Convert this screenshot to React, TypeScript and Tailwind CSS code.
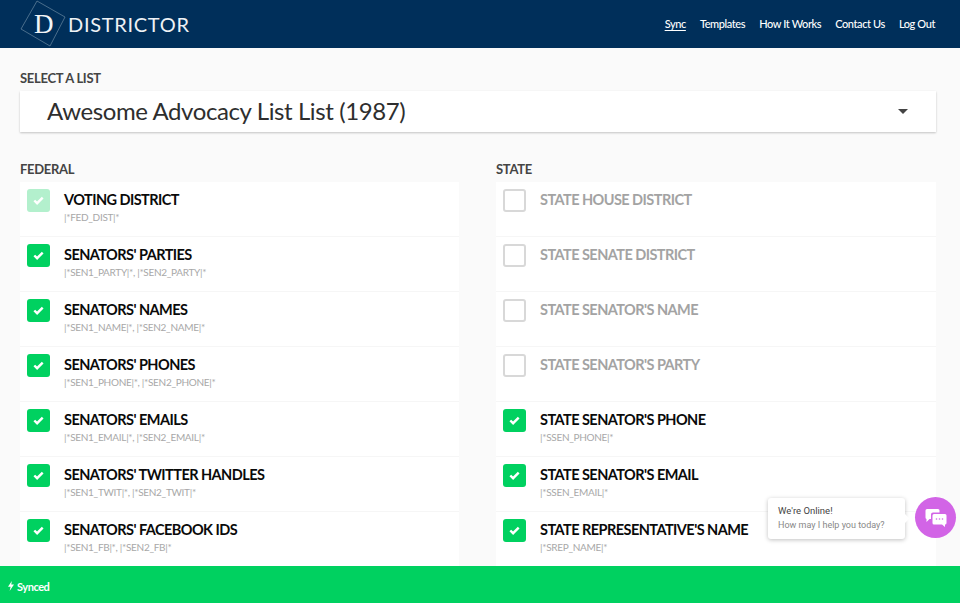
import React from "react";

type Row = { t: string; s?: string; on: boolean; dim?: boolean };

const federal: Row[] = [
  { t: "VOTING DISTRICT", s: "|*FED_DIST|*", on: true, dim: true },
  { t: "SENATORS' PARTIES", s: "|*SEN1_PARTY|*, |*SEN2_PARTY|*", on: true },
  { t: "SENATORS' NAMES", s: "|*SEN1_NAME|*, |*SEN2_NAME|*", on: true },
  { t: "SENATORS' PHONES", s: "|*SEN1_PHONE|*, |*SEN2_PHONE|*", on: true },
  { t: "SENATORS' EMAILS", s: "|*SEN1_EMAIL|*, |*SEN2_EMAIL|*", on: true },
  { t: "SENATORS' TWITTER HANDLES", s: "|*SEN1_TWIT|*, |*SEN2_TWIT|*", on: true },
  { t: "SENATORS' FACEBOOK IDS", s: "|*SEN1_FB|*, |*SEN2_FB|*", on: true },
];

const stateRows: Row[] = [
  { t: "STATE HOUSE DISTRICT", on: false },
  { t: "STATE SENATE DISTRICT", on: false },
  { t: "STATE SENATOR'S NAME", on: false },
  { t: "STATE SENATOR'S PARTY", on: false },
  { t: "STATE SENATOR'S PHONE", s: "|*SSEN_PHONE|*", on: true },
  { t: "STATE SENATOR'S EMAIL", s: "|*SSEN_EMAIL|*", on: true },
  { t: "STATE REPRESENTATIVE'S NAME", s: "|*SREP_NAME|*", on: true },
];

function Check({ on, dim }: { on: boolean; dim?: boolean }) {
  if (!on) {
    return <div className="w-[23px] h-[23px] shrink-0 rounded-[3px] border-2 border-[#d8d8d8] bg-white" />;
  }
  return (
    <div className={`w-[23px] h-[23px] shrink-0 rounded-[3px] flex items-center justify-center ${dim ? "bg-[#b3f0cd]" : "bg-[#00d160]"}`}>
      <svg width="11" height="9" viewBox="0 0 11 9" fill="none">
        <path d="M1.3 4.5 L4.1 7.2 L9.7 1.6" stroke="white" strokeWidth="2.4" />
      </svg>
    </div>
  );
}

function ListRow({ r }: { r: Row }) {
  return (
    <div className="h-[55px] shrink-0 flex gap-[14px] pl-[7px] pt-[7px] border-b border-[#f6f6f6] bg-white">
      <Check on={r.on} dim={r.dim} />
      <div className="min-w-0">
        <div className={`text-[14.5px] leading-[21px] font-bold tracking-[-0.55px] ${r.on ? "text-[#0a0a0a]" : "text-[#a3a3a3]"}`}>{r.t}</div>
        {r.s && <div className="text-[10px] leading-[12px] mt-[1px] tracking-[-0.3px] text-[#a8a8a8]">{r.s}</div>}
      </div>
    </div>
  );
}

function Column({ title, rows }: { title: string; rows: Row[] }) {
  return (
    <div className="min-w-0">
      <div className="text-[13px] leading-[16px] font-bold tracking-[-0.3px] text-[#444] mb-[5px]">{title}</div>
      <div>{rows.map((r) => <ListRow key={r.t} r={r} />)}</div>
    </div>
  );
}

export default function App() {
  return (
    <div className="relative h-[603px] w-[960px] overflow-hidden flex flex-col bg-[#fafafa] font-['Lato',sans-serif]">
      <header className="h-[48px] shrink-0 bg-[#002f5a] flex items-center justify-between pl-[20px] pr-[25px]">
        <div className="flex items-center">
          <svg width="47" height="48" viewBox="0 0 47 48" className="shrink-0">
            <polygon points="17,1 45,17 30,46 1,29" fill="none" stroke="#5d7d98" strokeWidth="0.8" />
            <text x="14" y="33" fill="#f2f5f7" fontSize="27" fontFamily="'Liberation Serif',serif">D</text>
          </svg>
          <span className="ml-[1px] text-[20px] leading-none tracking-[0.7px] text-[#eef2f5]">DISTRICTOR</span>
        </div>
        <nav className="flex gap-[14px] text-[11px] font-medium tracking-[-0.4px] text-white">
          <span className="underline underline-offset-2">Sync</span>
          <span>Templates</span>
          <span>How It Works</span>
          <span>Contact Us</span>
          <span>Log Out</span>
        </nav>
      </header>

      <main className="flex-1 min-h-0 overflow-hidden px-[20px] pt-[22px] pr-[24px]">
        <div className="text-[13px] leading-[16px] font-bold tracking-[-0.3px] text-[#444] mb-[5px]">SELECT A LIST</div>
        <div className="h-[41px] bg-white shadow-[0_1px_2px_rgba(0,0,0,0.22)] flex items-center justify-between pl-[27px] pr-[28px]">
          <span className="text-[24px] leading-none tracking-[-0.4px] text-[#2e2e2e] -mt-[1px]">Awesome Advocacy List List (1987)</span>
          <div className="w-0 h-0 border-x-[5.5px] border-x-transparent border-t-[5.5px] border-t-[#444]" />
        </div>
        <div className="grid grid-cols-[439px_440px] gap-x-[37px] mt-[29px]">
          <Column title="FEDERAL" rows={federal} />
          <Column title="STATE" rows={stateRows} />
        </div>
      </main>

      <footer className="h-[37px] shrink-0 bg-[#00d160] flex items-center pl-[8px] pt-[5px] gap-[3px] text-white">
        <svg width="6" height="10" viewBox="0 0 6 10" fill="white" className="-mt-[2px]"><path d="M3.8 0 L0 5.8 H2.6 L1.6 10 L6 3.6 H3.3 Z" /></svg>
        <span className="text-[11px] font-bold tracking-[-0.45px]">Synced</span>
      </footer>

      <div className="absolute left-[768px] top-[498px] w-[137px] h-[41px] bg-white rounded-[3px] shadow-[0_1px_4px_rgba(0,0,0,0.25)] pl-[10px] pt-[6px] font-['Roboto',sans-serif]">
        <div className="text-[9.5px] leading-[14px] text-[#444]">We're Online!</div>
        <div className="text-[9px] leading-[14px] text-[#888]">How may I help you today?</div>
        <div className="absolute -right-[3px] top-[17px] w-[7px] h-[7px] rotate-45 bg-white" />
      </div>
      <div className="absolute left-[915px] top-[497px] w-[41px] h-[41px] rounded-full bg-[#d264e6] flex items-center justify-center">
        <svg width="22" height="20" viewBox="0 0 22 20">
          <path d="M2 1 H13 a1.5 1.5 0 0 1 1.5 1.5 V4.5 H8 a2 2 0 0 0 -2 2 V11 H4.5 L1.5 14 V11 A1.5 1.5 0 0 1 .5 9.5 V2.5 A1.5 1.5 0 0 1 2 1 Z" fill="white" />
          <path d="M9 6 H20 a1.5 1.5 0 0 1 1.5 1.5 V15 a1.5 1.5 0 0 1 -1.5 1.5 V19 L17 16.5 H9 A1.5 1.5 0 0 1 7.5 15 V7.5 A1.5 1.5 0 0 1 9 6 Z" fill="white" />
          <circle cx="11.5" cy="11" r="0.8" fill="#d264e6" />
          <circle cx="14.5" cy="11" r="0.8" fill="#d264e6" />
          <circle cx="17.5" cy="11" r="0.8" fill="#d264e6" />
        </svg>
      </div>
    </div>
  );
}
